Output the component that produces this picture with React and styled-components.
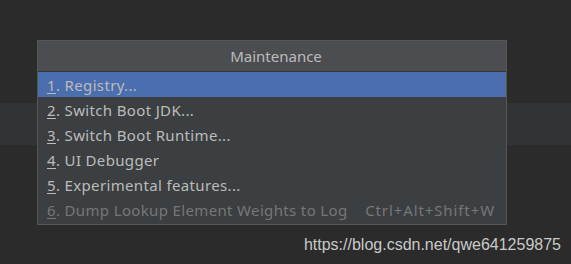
import React from 'react';
import styled, { createGlobalStyle } from 'styled-components';

const GlobalStyle = createGlobalStyle`
    html, body {
        margin: 0;
        padding: 0;
    }
    body {
        width: 571px;
        height: 264px;
        overflow: hidden;
        background: linear-gradient(to bottom, #2b2b2b 103px, #313335 103px, #313335 145px, #2b2b2b 145px);
        font-family: "Noto Sans", "Open Sans", sans-serif;
    }
`

const items = [
    { num: '1', label: 'Registry...', selected: true },
    { num: '2', label: 'Switch Boot JDK...' },
    { num: '3', label: 'Switch Boot Runtime...' },
    { num: '4', label: 'UI Debugger' },
    { num: '5', label: 'Experimental features...' },
    { num: '6', label: 'Dump Lookup Element Weights to Log', disabled: true, shortcut: 'Ctrl+Alt+Shift+W' },
];

const App = () => (
    <Page>
        <GlobalStyle />
        <Popup>
            <Header>Maintenance</Header>
            <List>
                {items.map(item => (
                    <Row key={item.num} selected={item.selected} disabled={item.disabled}>
                        <Label>
                            <Mnemonic>{item.num}</Mnemonic>. {item.label}
                        </Label>
                        {item.shortcut && <Shortcut>{item.shortcut}</Shortcut>}
                    </Row>
                ))}
            </List>
        </Popup>
        <Watermark>https://blog.csdn.net/qwe641259875</Watermark>
    </Page>
);

export default App;

const Page = styled.div`
    display: flex;
    flex-direction: column;
    padding-top: 40px;
    height: 264px;
    box-sizing: border-box;
`

const Popup = styled.div`
    margin-left: 37px;
    width: 470px;
    box-sizing: border-box;
    border: 1px solid #555759;
    background: #3c3f41;
`

const Header = styled.div`
    height: 30px;
    line-height: 30px;
    text-align: center;
    background: #4b4d51;
    border-bottom: 1px solid #323436;
    color: #bbbbbb;
    font-size: 15px;
    padding-left: 8px;
`

const List = styled.div`
    display: flex;
    flex-direction: column;
    padding-bottom: 2px;
`

const Row = styled.div`
    display: flex;
    align-items: center;
    justify-content: space-between;
    height: 25px;
    padding: 0 11px 0 9px;
    font-size: 15px;
    letter-spacing: 0.35px;
    background: ${p => (p.selected ? '#4b6eaf' : 'transparent')};
    color: ${p => (p.disabled ? '#757778' : '#bbbbbb')};
`

const Label = styled.span`
    white-space: nowrap;
`

const Mnemonic = styled.span`
    text-decoration: underline;
    text-underline-offset: 2px;
`

const Shortcut = styled.span`
    white-space: nowrap;
    letter-spacing: 0.9px;
`

const Watermark = styled.div`
    margin-top: 11px;
    padding-right: 10px;
    text-align: right;
    color: #c9c9c9;
    font-family: "Liberation Sans", Arial, sans-serif;
    font-size: 16px;
`
